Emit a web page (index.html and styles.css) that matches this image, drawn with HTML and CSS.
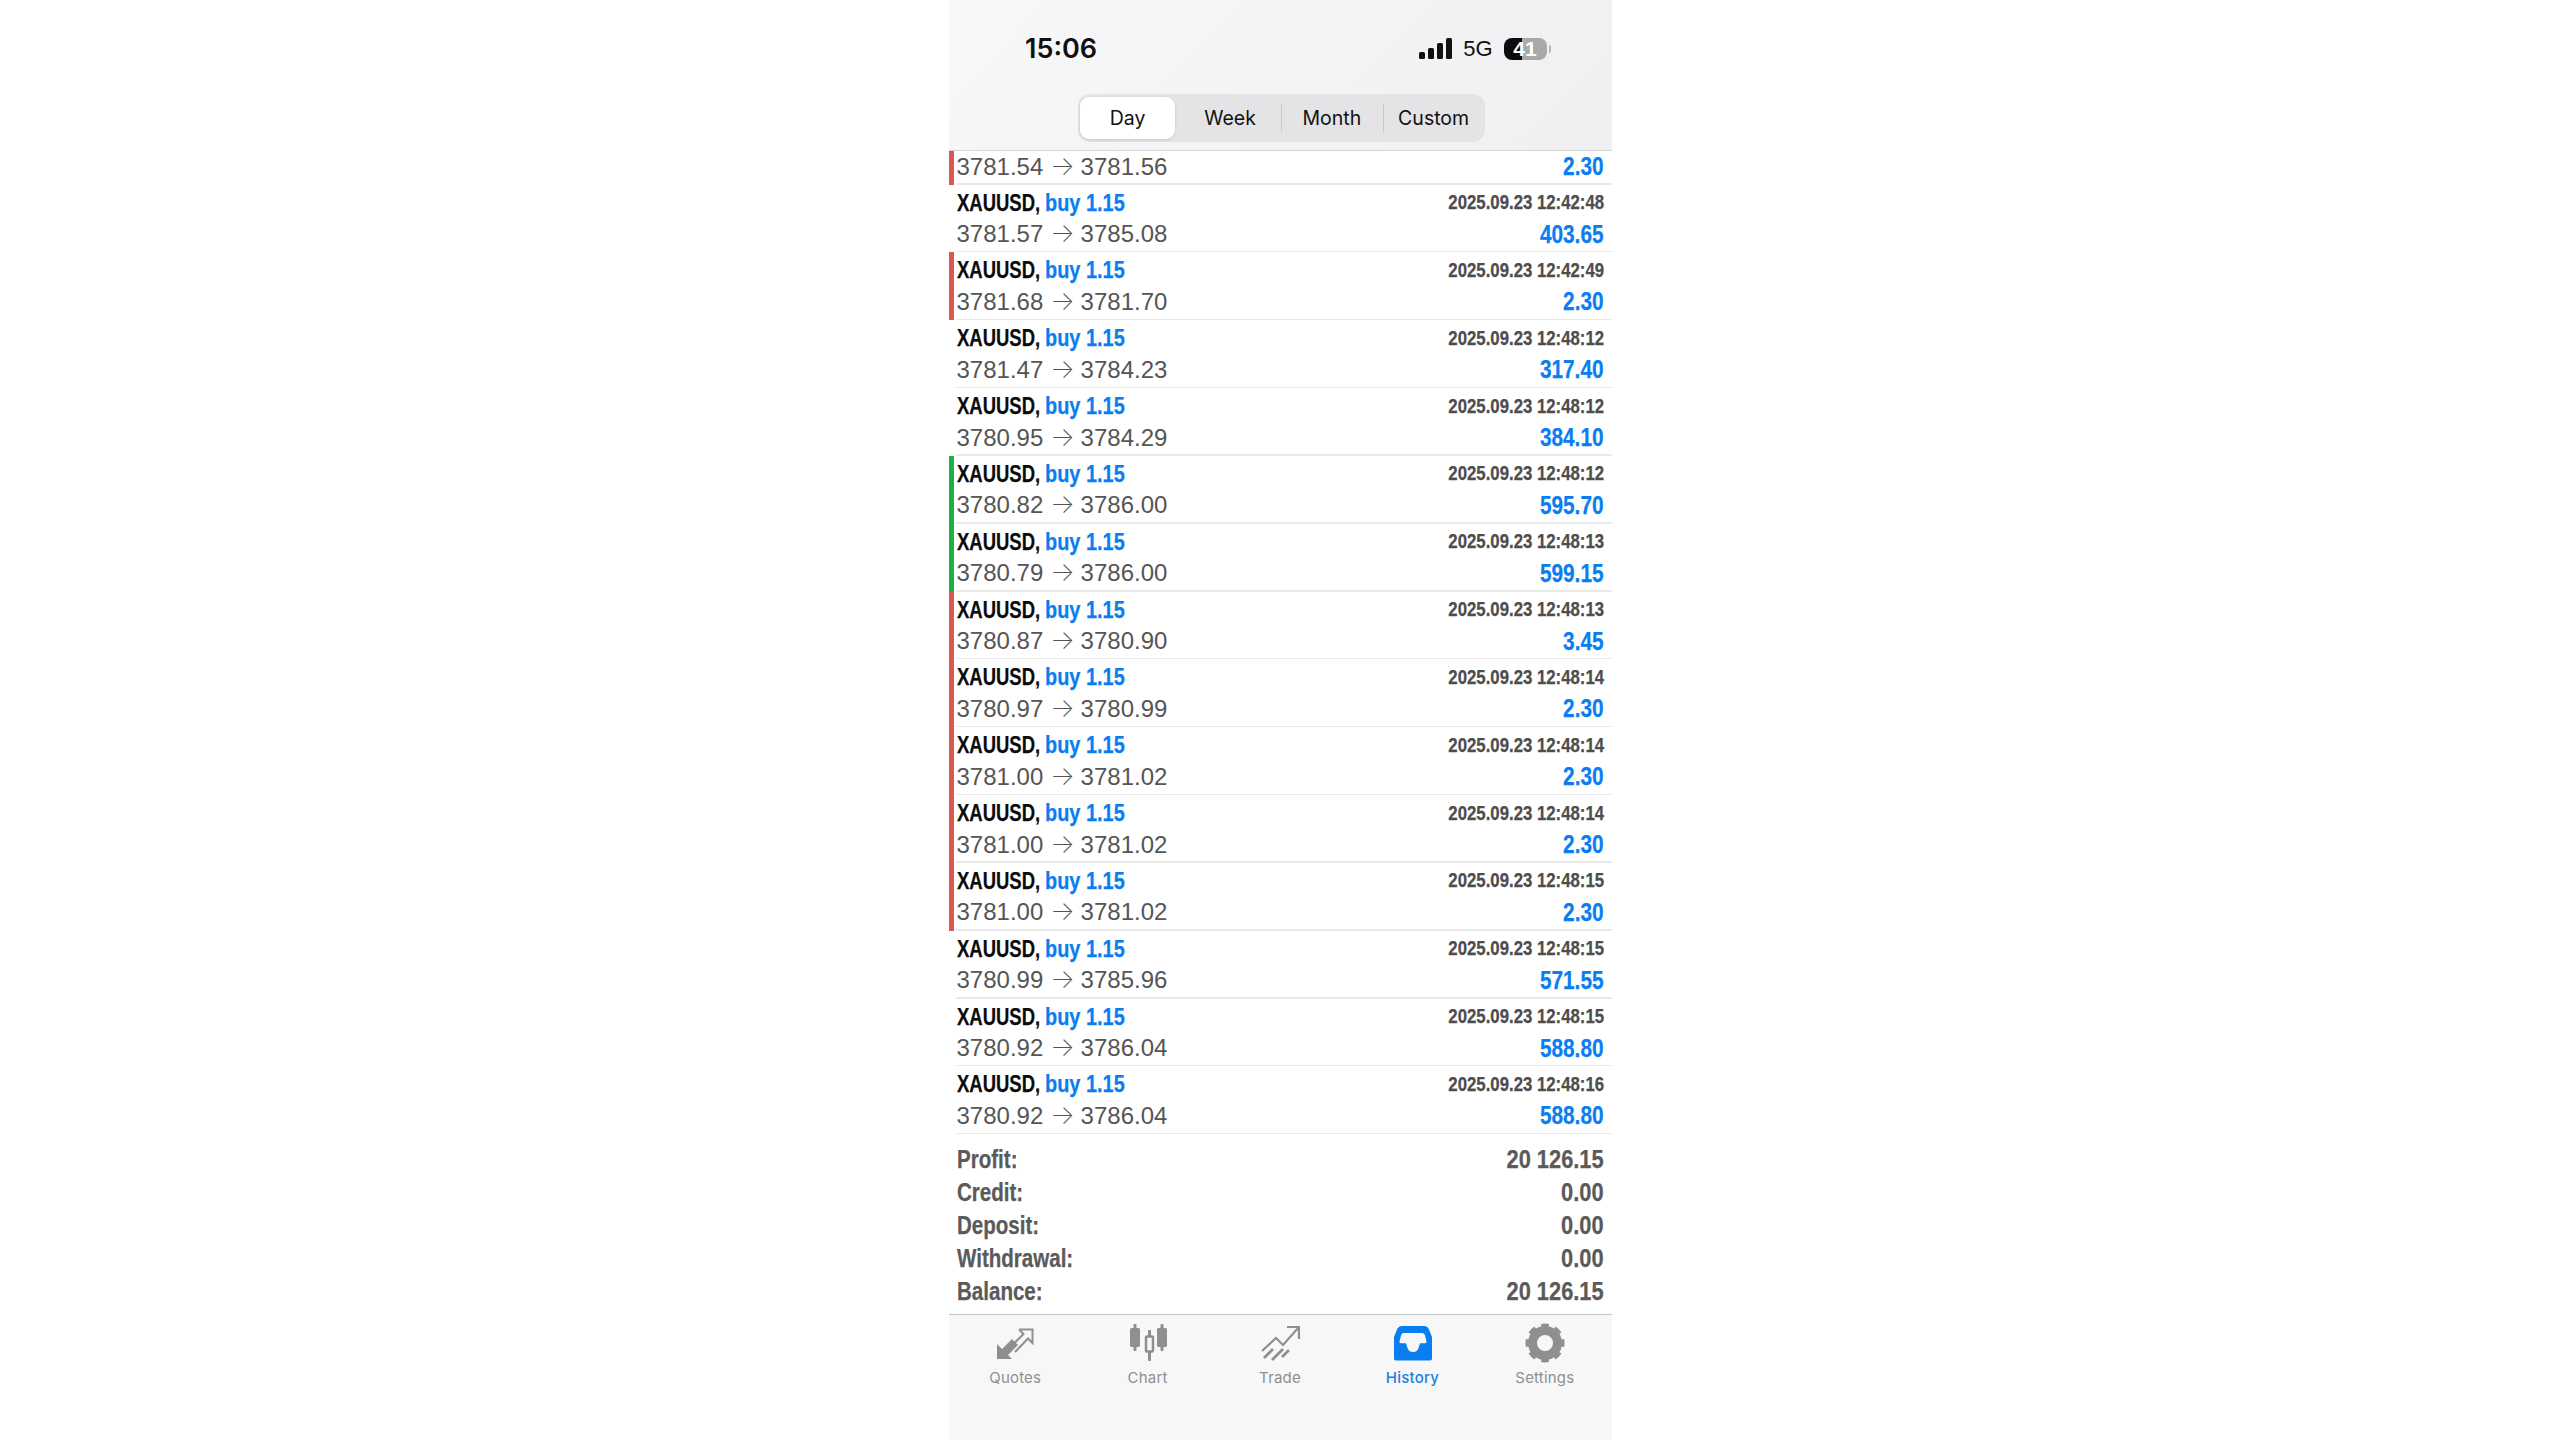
FILE: index.html
```html
<!DOCTYPE html>
<html lang="en">
<head>
<meta charset="utf-8">
<title>History</title>
<link rel="stylesheet" href="styles.css">
</head>
<body>
<main class="phone">
  <header class="head">
    <div class="status">
      <span class="time">15:06</span>
      <div class="status-right">
        <div class="signal"><i class="s1"></i><i class="s2"></i><i class="s3"></i><i class="s4"></i></div>
        <span class="net">5G</span>
        <div class="battery"><span class="batt-body">41</span><i class="batt-nub"></i></div>
      </div>
    </div>
    <div class="seg">
      <span class="seg-item on">Day</span>
      <span class="seg-item">Week</span>
      <span class="seg-item div">Month</span>
      <span class="seg-item div">Custom</span>
    </div>
  </header>

  <section class="list">
    <div class="row part red"><div class="line"><span class="price">3781.54 <i class="arr">→</i> 3781.56</span><b class="amt">2.30</b></div></div>
    <div class="row"><div class="line"><span class="title"><b class="sym">XAUUSD,</b> <b class="buy">buy 1.15</b></span><b class="date">2025.09.23 12:42:48</b></div><div class="line"><span class="price">3781.57 <i class="arr">→</i> 3785.08</span><b class="amt">403.65</b></div></div>
    <div class="row red"><div class="line"><span class="title"><b class="sym">XAUUSD,</b> <b class="buy">buy 1.15</b></span><b class="date">2025.09.23 12:42:49</b></div><div class="line"><span class="price">3781.68 <i class="arr">→</i> 3781.70</span><b class="amt">2.30</b></div></div>
    <div class="row"><div class="line"><span class="title"><b class="sym">XAUUSD,</b> <b class="buy">buy 1.15</b></span><b class="date">2025.09.23 12:48:12</b></div><div class="line"><span class="price">3781.47 <i class="arr">→</i> 3784.23</span><b class="amt">317.40</b></div></div>
    <div class="row"><div class="line"><span class="title"><b class="sym">XAUUSD,</b> <b class="buy">buy 1.15</b></span><b class="date">2025.09.23 12:48:12</b></div><div class="line"><span class="price">3780.95 <i class="arr">→</i> 3784.29</span><b class="amt">384.10</b></div></div>
    <div class="row green"><div class="line"><span class="title"><b class="sym">XAUUSD,</b> <b class="buy">buy 1.15</b></span><b class="date">2025.09.23 12:48:12</b></div><div class="line"><span class="price">3780.82 <i class="arr">→</i> 3786.00</span><b class="amt">595.70</b></div></div>
    <div class="row green"><div class="line"><span class="title"><b class="sym">XAUUSD,</b> <b class="buy">buy 1.15</b></span><b class="date">2025.09.23 12:48:13</b></div><div class="line"><span class="price">3780.79 <i class="arr">→</i> 3786.00</span><b class="amt">599.15</b></div></div>
    <div class="row red"><div class="line"><span class="title"><b class="sym">XAUUSD,</b> <b class="buy">buy 1.15</b></span><b class="date">2025.09.23 12:48:13</b></div><div class="line"><span class="price">3780.87 <i class="arr">→</i> 3780.90</span><b class="amt">3.45</b></div></div>
    <div class="row red"><div class="line"><span class="title"><b class="sym">XAUUSD,</b> <b class="buy">buy 1.15</b></span><b class="date">2025.09.23 12:48:14</b></div><div class="line"><span class="price">3780.97 <i class="arr">→</i> 3780.99</span><b class="amt">2.30</b></div></div>
    <div class="row red"><div class="line"><span class="title"><b class="sym">XAUUSD,</b> <b class="buy">buy 1.15</b></span><b class="date">2025.09.23 12:48:14</b></div><div class="line"><span class="price">3781.00 <i class="arr">→</i> 3781.02</span><b class="amt">2.30</b></div></div>
    <div class="row red"><div class="line"><span class="title"><b class="sym">XAUUSD,</b> <b class="buy">buy 1.15</b></span><b class="date">2025.09.23 12:48:14</b></div><div class="line"><span class="price">3781.00 <i class="arr">→</i> 3781.02</span><b class="amt">2.30</b></div></div>
    <div class="row red"><div class="line"><span class="title"><b class="sym">XAUUSD,</b> <b class="buy">buy 1.15</b></span><b class="date">2025.09.23 12:48:15</b></div><div class="line"><span class="price">3781.00 <i class="arr">→</i> 3781.02</span><b class="amt">2.30</b></div></div>
    <div class="row"><div class="line"><span class="title"><b class="sym">XAUUSD,</b> <b class="buy">buy 1.15</b></span><b class="date">2025.09.23 12:48:15</b></div><div class="line"><span class="price">3780.99 <i class="arr">→</i> 3785.96</span><b class="amt">571.55</b></div></div>
    <div class="row"><div class="line"><span class="title"><b class="sym">XAUUSD,</b> <b class="buy">buy 1.15</b></span><b class="date">2025.09.23 12:48:15</b></div><div class="line"><span class="price">3780.92 <i class="arr">→</i> 3786.04</span><b class="amt">588.80</b></div></div>
    <div class="row"><div class="line"><span class="title"><b class="sym">XAUUSD,</b> <b class="buy">buy 1.15</b></span><b class="date">2025.09.23 12:48:16</b></div><div class="line"><span class="price">3780.92 <i class="arr">→</i> 3786.04</span><b class="amt">588.80</b></div></div>
  </section>

  <section class="summary">
    <div class="sum-row"><b class="sum-l">Profit:</b><b class="sum-v">20 126.15</b></div>
    <div class="sum-row"><b class="sum-l">Credit:</b><b class="sum-v">0.00</b></div>
    <div class="sum-row"><b class="sum-l">Deposit:</b><b class="sum-v">0.00</b></div>
    <div class="sum-row"><b class="sum-l">Withdrawal:</b><b class="sum-v">0.00</b></div>
    <div class="sum-row"><b class="sum-l">Balance:</b><b class="sum-v">20 126.15</b></div>
  </section>

  <nav class="tabs">
    <div class="tab">
      <svg class="ico" viewBox="0 0 40 40"><path fill="#8f8f8f" d="M2 36V21l5 5 10-10 6 6-10 10 4 4z"/><path fill="none" stroke="#8f8f8f" stroke-width="2" d="M24 6.500H37.500V20L33 15.500 20 29M24 6.500L28.500 11 16.500 23"/></svg>
      <span class="tab-label">Quotes</span>
    </div>
    <div class="tab">
      <svg class="ico" viewBox="0 0 40 40"><g fill="#8f8f8f"><rect x="5.500" y="1" width="3" height="27" rx="1"/><rect x="2" y="5" width="10" height="19" rx="1.500"/><rect x="32.500" y="1" width="3" height="27" rx="1"/><rect x="29" y="5" width="10" height="19" rx="1.500"/><rect x="20" y="7" width="3" height="31" rx="1"/></g><rect x="18" y="13.500" width="7" height="15" rx="1" fill="#f7f7f7" stroke="#8f8f8f" stroke-width="2.500"/></svg>
      <span class="tab-label">Chart</span>
    </div>
    <div class="tab">
      <svg class="ico" viewBox="0 0 40 40"><g fill="none" stroke="#8f8f8f" stroke-width="2.200"><path d="M2 28l14-13 7 7 16-18"/><path d="M27 4h12v12"/><path stroke-width="2.800" d="M4 35l9-9M12 37l11-11M22 34l7-7"/></g></svg>
      <span class="tab-label">Trade</span>
    </div>
    <div class="tab tab-on">
      <svg class="ico" viewBox="0 0 40 40"><path fill="#0a7df0" d="M10 3h22c2.500 0 4 1.200 5 3.500l3 7.500v21.500c0 1.200-.8 2-2 2H4c-1.200 0-2-.8-2-2V14l3-7.500C6 4.200 7.500 3 10 3z"/><path fill="#f7f7f7" d="M12 10h18c1.500 0 2.500.8 3 2.500l1.500 6c.2 1-.5 1.700-1.500 1.700h-5L26.500 25c-.8 2.800-2.500 4-5.500 4s-4.700-1.200-5.500-4L14 20.200H9c-1 0-1.700-.7-1.500-1.700l1.500-6C9.500 10.800 10.500 10 12 10z"/></svg>
      <span class="tab-label">History</span>
    </div>
    <div class="tab">
      <svg class="ico" viewBox="0 0 40 40"><g fill="none" stroke="#8f8f8f"><circle cx="20" cy="20" r="12.500" stroke-width="9"/><circle cx="20" cy="20" r="17.300" stroke-width="4.500" pathLength="80" stroke-dasharray="5.500 4.500" stroke-dashoffset="2.750"/></g></svg>
      <span class="tab-label">Settings</span>
    </div>
  </nav>
</main>
</body>
</html>
```

FILE: styles.css
```css
* { box-sizing: border-box; }
html, body { margin: 0; padding: 0; background: #fff; }
body { height: 1440px; overflow: hidden; font-family: "Liberation Sans", Arial, sans-serif; }
.phone { width: 663px; height: 1440px; margin-left: 949px; display: flex; flex-direction: column; background: #fff; }

/* header */
.head { height: 151px; background: linear-gradient(135deg, #f8f8f9 0%, #f3f3f6 60%, #f0f0f2 100%); border-bottom: 1px solid #d4d4d6; display: flex; flex-direction: column; }
.status { height: 94px; padding: 3px 61px 0 76px; display: flex; justify-content: space-between; align-items: center; }
.time { font-family: Inter, sans-serif; font-weight: 600; font-size: 27px; color: #111; }
.status-right { display: flex; align-items: center; gap: 11px; }
.signal { display: flex; align-items: flex-end; gap: 3px; height: 21px; }
.signal i { display: block; width: 6px; background: #111; border-radius: 1.5px; }
.s1 { height: 7px; } .s2 { height: 11px; } .s3 { height: 16px; } .s4 { height: 21px; }
.net { font-size: 22px; color: #111; line-height: 1; }
.battery { display: flex; align-items: center; gap: 2px; }
.batt-body { width: 43px; height: 22px; border-radius: 8px; background: linear-gradient(90deg, #0c0c0c 0 43%, #a9a9ab 43% 100%); color: #fff; font-weight: 700; font-size: 21px; line-height: 22px; text-align: center; }
.batt-nub { width: 2.500px; height: 8px; background: #b5b5b7; border-radius: 0 2px 2px 0; }
.seg { align-self: center; width: 407px; height: 48px; background: #e4e4e6; border-radius: 12px; display: flex; margin-left: 1px; }
.seg-item { flex: 0 0 25%; display: flex; align-items: center; justify-content: center; font-family: Inter, sans-serif; font-size: 19.500px; color: #111; position: relative; }
.seg-item.on { flex: 0 0 calc(25% - 6.500px); margin: 3px 4px 3px 2.500px; background: #fff; border-radius: 9px; box-shadow: 0 1px 3px rgba(0,0,0,.12); }
.seg-item.div::before { content: ""; position: absolute; left: 0; top: 10px; bottom: 10px; width: 1px; background: #c9c9cb; }

/* rows */
.list { display: flex; flex-direction: column; }
.row { height: 67.850px; padding: 2px 8px 0 7.500px; position: relative; display: flex; flex-direction: column; }
.row::after { content: ""; position: absolute; left: 7px; right: 0; bottom: 0; height: 1.500px; background: #e9e9ea; }
.row.part { height: 33.500px; padding-top: 0; }
.row.part .line { margin-top: -.5px; }
.row.red::before, .row.green::before { content: ""; position: absolute; left: 0; top: 0; bottom: 0; width: 4.500px; }
.row.red::before { background: #d9584f; }
.row.green::before { background: #1cb146; }
.line { height: 32px; display: flex; justify-content: space-between; align-items: center; }
.line + .line { margin-top: -.5px; }
.price { font-size: 24px; color: #555; white-space: nowrap; }
.arr { display: inline-block; width: 24px; text-align: center; font-family: Inter, sans-serif; font-style: normal; font-weight: 200; font-size: 26px; line-height: 1; }
.title { font-size: 24px; white-space: nowrap; display: flex; gap: 0; }
.sym, .buy, .date, .amt, .sum-l, .sum-v { display: inline-block; white-space: nowrap; font-weight: 700; -webkit-text-stroke: .25px currentColor; }
.sym { color: #0b0b0b; width: 88.500px; transform: scaleX(.77); transform-origin: 0 50%; }
.buy { color: #0a7df0; transform: scaleX(.83); transform-origin: 0 50%; }
.date { font-size: 19.500px; color: #4d4d4d; transform: scaleX(.86); transform-origin: 100% 50%; }
.amt { font-size: 26px; color: #0a7df0; transform: scaleX(.8); transform-origin: 100% 50%; }

/* summary */
.summary { flex: 1; padding: 8.500px 8px 0 7.500px; }
.sum-row { height: 33.150px; display: flex; justify-content: space-between; align-items: center; }
.sum-l, .sum-v { font-size: 26px; color: #5a5a5a; }
.sum-l { transform: scaleX(.79); transform-origin: 0 50%; }
.sum-v { transform: scaleX(.84); transform-origin: 100% 50%; }

/* tabs */
.tabs { height: 126px; background: #f7f7f7; border-top: 1.500px solid #c6c6c8; display: flex; padding: 7.500px 1px 0 0; }
.tab { flex: 1; display: flex; flex-direction: column; align-items: center; gap: 4px; }
.ico { width: 40px; height: 40px; display: block; }
.tab-label { font-family: Inter, sans-serif; font-size: 15px; line-height: 21px; letter-spacing: .2px; color: #8f8f8f; }
.tab-on .tab-label { color: #1a7fe0; font-weight: 500; }
```
